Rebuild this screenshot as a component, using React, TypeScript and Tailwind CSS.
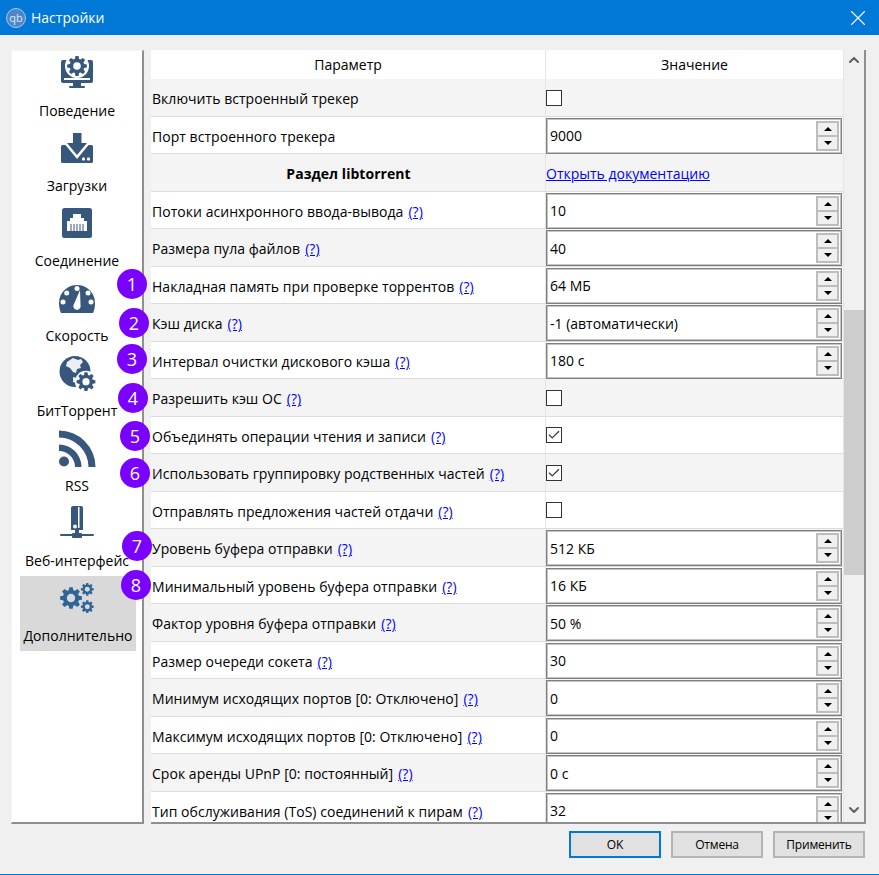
import { Check, ChevronUp, ChevronDown, X } from "lucide-react";

const NAVY = "#38577c";

// gear outline built from teeth around a circle
const gearPath = (cx: number, cy: number, r: number, teeth: number) => {
  const inner = r * 0.74;
  const pts: string[] = [];
  const step = (Math.PI * 2) / teeth;
  for (let i = 0; i < teeth; i++) {
    const a = i * step - Math.PI / 2;
    const list: [number, number][] = [
      [inner, a - step * 0.36],
      [r, a - step * 0.2],
      [r, a + step * 0.2],
      [inner, a + step * 0.36],
    ];
    for (const [rad, an] of list) {
      pts.push(`${(cx + rad * Math.cos(an)).toFixed(2)} ${(cy + rad * Math.sin(an)).toFixed(2)}`);
    }
  }
  return `M${pts.join("L")}Z`;
};

const Gear = ({ cx, cy, r, teeth = 8, fill, hole = "#fff" }: { cx: number; cy: number; r: number; teeth?: number; fill: string; hole?: string }) => (
  <>
    <path d={gearPath(cx, cy, r, teeth)} fill={fill} />
    <circle cx={cx} cy={cy} r={r * 0.38} fill={hole} />
  </>
);

const BehaviorIcon = () => (
  <svg width="36" height="36" viewBox="0 0 36 36" className="overflow-visible">
    <rect x="2" y="1" width="32" height="23" rx="2" fill={NAVY} />
    <rect x="14" y="24" width="8" height="3" fill={NAVY} />
    <rect x="10" y="27" width="16" height="2" rx="1" fill={NAVY} />
    <circle cx="18" cy="7" r="12" fill="#fff" />
    <rect x="5" y="19" width="26" height="2" fill="#fff" />
    <Gear cx={18} cy={7} r={10} fill={NAVY} />
  </svg>
);

const DownloadIcon = () => (
  <svg width="36" height="36" viewBox="0 0 36 36" className="overflow-visible">
    <path d="M14 -1h8.500v10H28L18 21 8 9h6z" fill={NAVY} />
    <path d="M2 12.500q0-1.500 1.500-1.500h3L18 25l11.500-14h3q1.500 0 1.500 1.500v15q0 1.500-1.500 1.500h-29Q2 29 2 27.500z" fill={NAVY} />
    <rect x="23" y="23.500" width="3" height="3" rx="1" fill="#fff" />
    <rect x="28" y="23.500" width="3" height="3" rx="1" fill="#fff" />
  </svg>
);

const ConnectionIcon = () => (
  <svg width="36" height="36" viewBox="0 0 36 36" className="overflow-visible">
    <rect x="3" y="-1" width="30" height="30" rx="2.500" fill={NAVY} />
    <path d="M8 22V12h3V9h3V5h8v4h3v3h3v10z" fill="#fff" />
    <path d="M12 15v7M15 15v7M18 15v7M21 15v7M24 15v7" stroke={NAVY} strokeWidth="1" />
  </svg>
);

const SpeedIcon = () => (
  <svg width="36" height="36" viewBox="0 0 36 36" className="overflow-visible">
    <path d="M2 29C0.500 26 0 22 0 19a18 18 0 0 1 36 0c0 3-.5 7-2 10z" fill={NAVY} />
    <circle cx="18" cy="4.500" r="2.500" fill="#fff" />
    <circle cx="7.700" cy="9" r="2.500" fill="#fff" />
    <circle cx="29" cy="9" r="2.500" fill="#fff" />
    <circle cx="4" cy="18" r="2.500" fill="#fff" />
    <circle cx="32" cy="18" r="2.500" fill="#fff" />
    <path d="M21 6l.5 15a3.700 3.700 0 1 1-6.500-1z" fill="#fff" />
  </svg>
);

const TorrentIcon = () => (
  <svg width="36" height="36" viewBox="0 0 36 36" className="overflow-visible">
    <circle cx="16" cy="12.500" r="15.500" fill={NAVY} />
    <path d="M8 3l6-4 5 2 3-1 2 3-3 3 1 3-4 1-1 4-3-1-3-4-4-2z" fill="#fff" opacity=".9" />
    <path d="M14 18l4 1-1 5-3-1z" fill="#fff" opacity=".9" />
    <circle cx="27" cy="22.700" r="11" fill="#fff" />
    <Gear cx={27} cy={22.700} r={9.500} fill={NAVY} />
  </svg>
);

const RssIcon = () => (
  <svg width="36" height="36" viewBox="0 0 36 36" className="overflow-visible">
    <circle cx="5" cy="27.500" r="5" fill={NAVY} />
    <path d="M0 10.500v6.500a16 16 0 0 1 16 16h6.500A22.500 22.500 0 0 0 0 10.500z" fill={NAVY} />
    <path d="M0 -3.500v7a29.500 29.500 0 0 1 29.500 29.500h7A36.500 36.500 0 0 0 0 -3.500z" fill={NAVY} />
  </svg>
);

const WebIcon = () => (
  <svg width="36" height="36" viewBox="0 0 36 36" className="overflow-visible">
    <path d="M12 -1q0-2 2-2h8q2 0 2 2v22H12z" fill={NAVY} />
    <path d="M19 -2h1.500v21H19z" fill="#fff" />
    <circle cx="16" cy="17.500" r="2" fill="#fff" />
    <rect x="16" y="21" width="4" height="4" fill={NAVY} />
    <rect x="1" y="25" width="34" height="2" rx="1" fill={NAVY} />
    <rect x="13" y="24" width="10" height="5" rx="1" fill={NAVY} />
  </svg>
);

const AdvancedIcon = () => (
  <svg width="36" height="36" viewBox="0 0 36 36" className="overflow-visible">
    <Gear cx={11} cy={14} r={11} fill="#2f6497" hole="#d9d9d9" />
    <Gear cx={27.300} cy={5.300} r={6.500} fill="#2f6497" hole="#d9d9d9" />
    <Gear cx={27.300} cy={22.700} r={6.500} fill="#2f6497" hole="#d9d9d9" />
  </svg>
);

const navItems = [
  { label: "Поведение", Icon: BehaviorIcon },
  { label: "Загрузки", Icon: DownloadIcon },
  { label: "Соединение", Icon: ConnectionIcon },
  { label: "Скорость", Icon: SpeedIcon },
  { label: "БитТоррент", Icon: TorrentIcon },
  { label: "RSS", Icon: RssIcon },
  { label: "Веб-интерфейс", Icon: WebIcon },
  { label: "Дополнительно", Icon: AdvancedIcon, active: true },
];

type Row = { label: string; help?: boolean; bold?: boolean; spin?: string; check?: boolean; link?: string };

const rows: Row[] = [
  { label: "Включить встроенный трекер", check: false },
  { label: "Порт встроенного трекера", spin: "9000" },
  { label: "Раздел libtorrent", bold: true, link: "Открыть документацию" },
  { label: "Потоки асинхронного ввода-вывода", help: true, spin: "10" },
  { label: "Размера пула файлов", help: true, spin: "40" },
  { label: "Накладная память при проверке торрентов", help: true, spin: "64 МБ" },
  { label: "Кэш диска", help: true, spin: "-1 (автоматически)" },
  { label: "Интервал очистки дискового кэша", help: true, spin: "180 с" },
  { label: "Разрешить кэш ОС", help: true, check: false },
  { label: "Объединять операции чтения и записи", help: true, check: true },
  { label: "Использовать группировку родственных частей", help: true, check: true },
  { label: "Отправлять предложения частей отдачи", help: true, check: false },
  { label: "Уровень буфера отправки", help: true, spin: "512 КБ" },
  { label: "Минимальный уровень буфера отправки", help: true, spin: "16 КБ" },
  { label: "Фактор уровня буфера отправки", help: true, spin: "50 %" },
  { label: "Размер очереди сокета", help: true, spin: "30" },
  { label: "Минимум исходящих портов [0: Отключено]", help: true, spin: "0" },
  { label: "Максимум исходящих портов [0: Отключено]", help: true, spin: "0" },
  { label: "Срок аренды UPnP [0: постоянный]", help: true, spin: "0 с" },
  { label: "Тип обслуживания (ToS) соединений к пирам", help: true, spin: "32" },
];

const badges = [
  { n: 1, pos: "left-[117px] top-[269px]" },
  { n: 2, pos: "left-[119px] top-[308px]" },
  { n: 3, pos: "left-[117px] top-[344px]" },
  { n: 4, pos: "left-[118px] top-[383px]" },
  { n: 5, pos: "left-[120px] top-[421px]" },
  { n: 6, pos: "left-[120px] top-[458px]" },
  { n: 7, pos: "left-[122px] top-[531px]" },
  { n: 8, pos: "left-[121px] top-[570px]" },
];

const SpinBox = ({ value }: { value: string }) => (
  <div className="h-[36px] w-[296px] shrink-0 border border-[#7f7f7f] shadow-[inset_0_0_0_1px_#c4c4c4] bg-white flex items-center justify-between pl-[3px] pr-[2px]">
    <span>{value}</span>
    <div className="flex flex-col w-[23px] h-[30px] border-2 border-[#bdbdbd] bg-[#f0f0f0]">
      <div className="flex-1 flex items-center justify-center border-b border-[#bdbdbd]">
        <div className="w-0 h-0 border-x-[4px] border-x-transparent border-b-[4px] border-b-black" />
      </div>
      <div className="flex-1 flex items-center justify-center border-t border-[#bdbdbd]">
        <div className="w-0 h-0 border-x-[4px] border-x-transparent border-t-[4px] border-t-black" />
      </div>
    </div>
  </div>
);

const CheckBox = ({ checked }: { checked: boolean }) => (
  <div className="w-[16px] h-[16px] border border-[#333] bg-white flex items-center justify-center">
    {checked && <Check className="w-[14px] h-[14px] text-[#333]" strokeWidth={2} />}
  </div>
);

export default function App() {
  return (
    <div className="relative w-[879px] h-[875px] overflow-hidden bg-[#f0f0f0] flex flex-col text-[14px] text-black font-['Open_Sans','Liberation_Sans',sans-serif] border-b border-[#0078d7]">
      <div className="h-[35px] shrink-0 bg-[#0078d7] flex items-center pl-[6px] pr-[8px] text-white">
        <div className="w-[20px] h-[20px] rounded-full bg-[#4f86c6] border border-[#a8c8ee] flex items-center justify-center text-[11px] leading-none text-[#dbe9fa]">qb</div>
        <span className="ml-[5px] flex-1">Настройки</span>
        <X className="w-[26px] h-[26px]" strokeWidth={1} />
      </div>

      <div className="flex pt-[15px] pl-[11px] h-[789px]">
        <div className="w-[133px] h-[774px] bg-white border border-[#f4f4f4] border-r-2 border-b-2 border-r-[#8f8f8f] border-b-[#8f8f8f] overflow-hidden">
          {navItems.map(({ label, Icon, active }) => (
            <div key={label} className="h-[75px] ml-[8px] w-[116px] flex flex-col items-center">
              <div className={`w-[116px] h-[75px] flex flex-col items-center pt-[8px] ${active ? "bg-[#d9d9d9]" : "pr-[2px]"}`}>
                <div className="h-[36px]"><Icon /></div>
                <div className="mt-[5px] whitespace-nowrap">{label}</div>
              </div>
            </div>
          ))}
        </div>

        <div className="ml-[7px] w-[715px] h-[774px] flex border-r-2 border-b-2 border-[#8f8f8f]">
          <div className="w-[693px] flex flex-col border-r border-[#e5e5e5]">
            <div className="h-[29.4px] shrink-0 flex bg-white">
              <div className="w-[395px] flex items-center justify-center border-r border-[#e5e5e5]">Параметр</div>
              <div className="flex-1 flex items-center justify-center">Значение</div>
            </div>
            <div className="flex-1 overflow-hidden">
              {rows.map((row, i) => (
                <div key={row.label} className={`h-[37.5px] flex border-b border-[#dcdcdc] ${i % 2 === 0 ? "bg-[#f4f4f4]" : "bg-white"}`}>
                  <div className={`w-[395px] flex items-center border-r border-[#e5e5e5] pl-[1px] pt-[2px] whitespace-nowrap tracking-[0.04px] ${row.bold ? "justify-center font-bold" : ""}`}>
                    {row.label}
                    {row.help && <span className="ml-[5px] text-[#0000ff] underline">(?)</span>}
                  </div>
                  <div className={`flex-1 flex items-center ${row.check === undefined ? "pt-[1px]" : ""}`}>
                    {row.spin && <SpinBox value={row.spin} />}
                    {row.check !== undefined && <CheckBox checked={row.check} />}
                    {row.link && <span className="text-[#0000ff] underline">{row.link}</span>}
                  </div>
                </div>
              ))}
            </div>
          </div>
          <div className="flex-1 flex flex-col items-center">
            <ChevronUp className="w-[16px] h-[16px] mt-[2px] shrink-0 text-[#606060]" strokeWidth={3} />
            <div className="w-[20px] h-[265px] shrink-0 bg-[#cdcdcd] mt-[242px]" />
            <ChevronDown className="w-[16px] h-[16px] mt-auto mb-[4px] shrink-0 text-[#606060]" strokeWidth={3} />
          </div>
        </div>
      </div>

      <div className="flex justify-end gap-[10px] pr-[14px] pt-[7px] text-[12px] tracking-[-0.2px]">
        <button className="w-[92px] h-[27px] bg-[#e1e1e1] border-2 border-[#0078d7]">OK</button>
        <button className="w-[92px] h-[27px] bg-[#e1e1e1] border-2 border-[#b4b4b4]">Отмена</button>
        <button className="w-[92px] h-[27px] bg-[#e1e1e1] border-2 border-[#b4b4b4]">Применить</button>
      </div>

      {badges.map(({ n, pos }) => (
        <div key={n} className={`absolute ${pos} w-[30px] h-[30px] rounded-full bg-[#7a00ff] text-white text-[18px] flex items-center justify-center`}>{n}</div>
      ))}
    </div>
  );
}
